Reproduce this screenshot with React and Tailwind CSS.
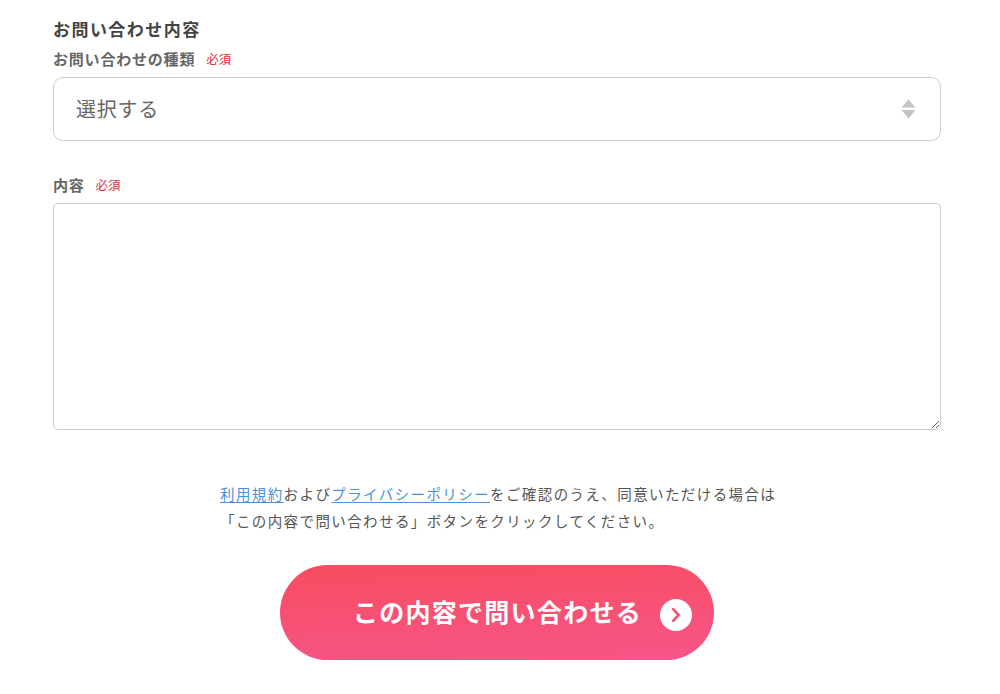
export default function App() {
  return (
    <div className="w-[1000px] h-[694px] bg-white overflow-hidden px-[53px] pt-[18px] text-[#555] font-['Noto_Sans_CJK_JP','Noto_Sans',sans-serif]">
      <h2 className="text-[17px] leading-[22px] font-bold text-[#444] tracking-[1.45px]">お問い合わせ内容</h2>
      <div className="mt-[9px] flex items-center h-[20px]">
        <span className="text-[15px] font-bold text-[#666] tracking-[0.8px]">お問い合わせの種類</span>
        <span className="ml-[11px] text-[12.5px] text-[#d9303e]">必須</span>
      </div>
      <div className="mt-[8px] w-[888px] h-[64px] border border-[#ccc] rounded-[10px] flex items-center justify-between pl-[22px] pr-[24px]">
        <span className="text-[20px] text-[#666] tracking-[0.75px]">選択する</span>
        <svg width="15" height="20" viewBox="0 0 15 20" className="block">
          <path d="M7.5 0.5 L14.5 8.5 H0.5 Z" fill="#c4c4c4" />
          <path d="M0.5 11 H14.5 L7.5 19.5 Z" fill="#c4c4c4" />
        </svg>
      </div>
      <div className="mt-[34px] flex items-center h-[20px]">
        <span className="text-[15px] font-bold text-[#666] tracking-[0.7px]">内容</span>
        <span className="ml-[11px] text-[12.5px] text-[#d9303e]">必須</span>
      </div>
      <textarea className="mt-[8px] block w-[888px] h-[227px] border border-[#ccc] rounded-[5px] outline-none" />
      <div className="mt-[50px] ml-[167px] text-[14.5px] leading-[27px] text-[#555] tracking-[1.4px]">
        <p className="whitespace-nowrap"><a className="text-[#4a8fd8] underline underline-offset-2">利用規約</a>および<a className="text-[#4a8fd8] underline underline-offset-2">プライバシーポリシー</a>をご確認のうえ、同意いただける場合は</p>
        <p className="whitespace-nowrap">「この内容で問い合わせる」ボタンをクリックしてください。</p>
      </div>
      <div className="mt-[31px] flex justify-center pr-[6px]">
        <button className="w-[434px] h-[95px] rounded-full bg-[linear-gradient(177deg,#f74d60,#f75589)] flex items-center pl-[73px] text-white">
          <span className="mb-[2px] text-[25px] font-bold leading-none tracking-[1.27px]">この内容で問い合わせる</span>
          <span className="ml-[18px] mt-[5px] w-[32px] h-[32px] rounded-full bg-white flex items-center justify-center">
            <svg width="12" height="16" viewBox="0 0 12 16" fill="none"><path d="M3.2 2.2 L8.6 8 L3.2 13.8" stroke="#f7506f" strokeWidth="2.6" strokeLinecap="round" strokeLinejoin="round" /></svg>
          </span>
        </button>
      </div>
    </div>
  );
}
